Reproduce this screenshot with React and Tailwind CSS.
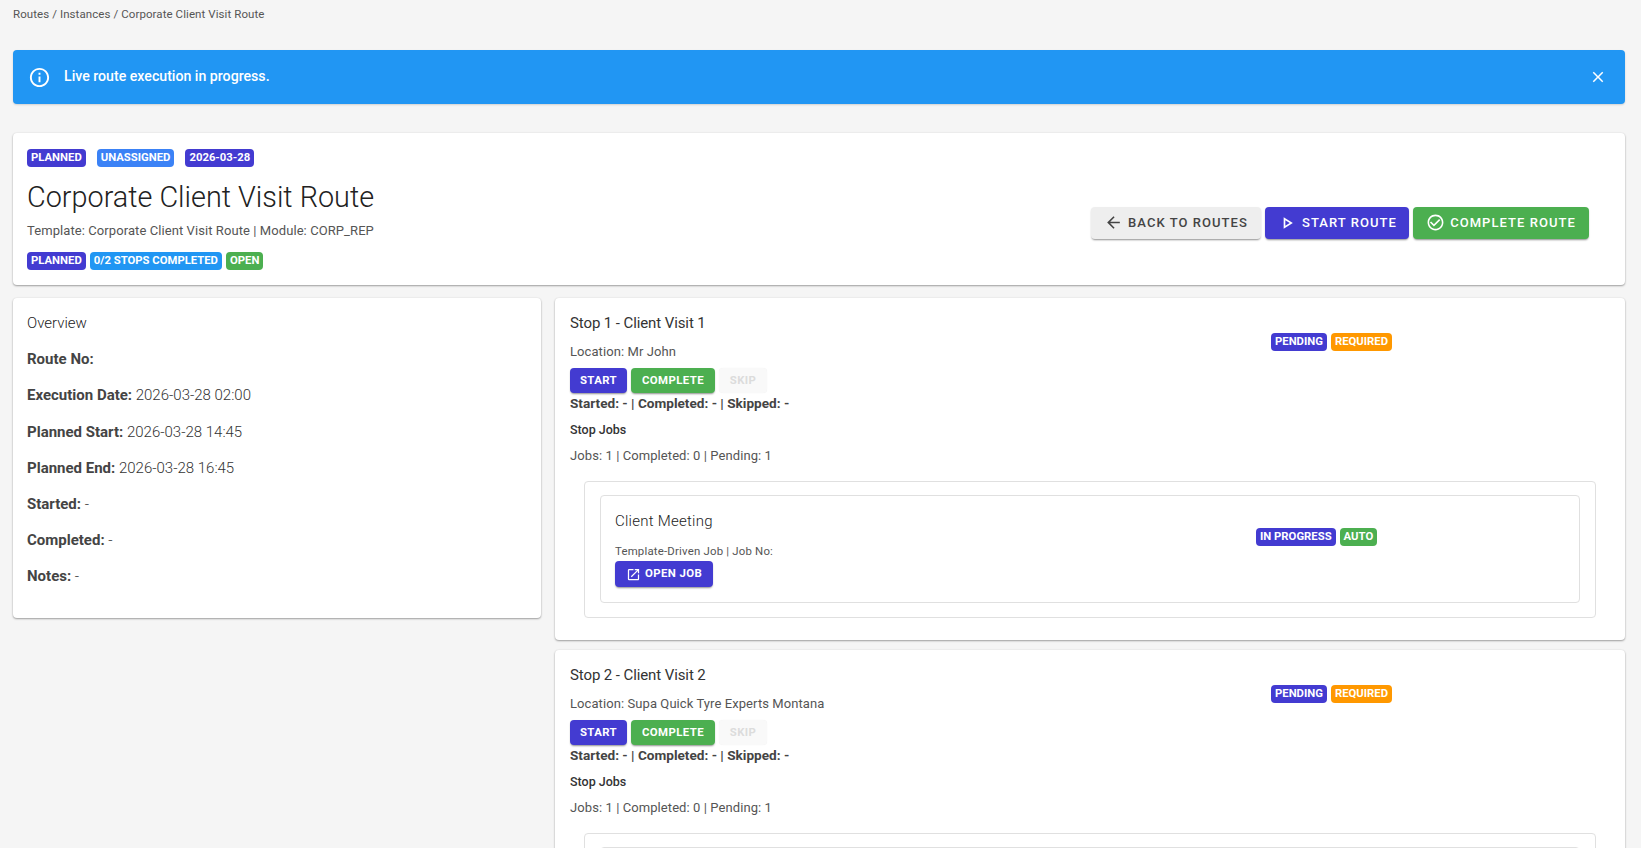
import React from "react";
import { MdInfoOutline, MdClose, MdArrowBack, MdOutlinePlayArrow, MdCheckCircleOutline, MdOpenInNew } from "react-icons/md";

const INDIGO = "bg-[#433bd1]";
const GREEN = "bg-[#4caf50]";
const BLUE = "bg-[#2196f3]";
const SKY = "bg-[#3b82f6]";
const ORANGE = "bg-[#ff9800]";

function Chip({ color, children }) {
  return (
    <span className={`${color} inline-flex h-[18px] items-center rounded-[4px] px-[4px] text-[11.3px] leading-none font-bold text-white`}>
      {children}
    </span>
  );
}

function MainButton({ color, icon, children, w }) {
  return (
    <button className={`${color} ${w} flex h-[32px] items-center justify-center gap-[5px] rounded-[4px] text-[13px] font-medium tracking-[1.05px] shadow-[0_2px_2px_-1px_rgba(0,0,0,0.35),0_1px_2px_rgba(0,0,0,0.12)]`}>
      {icon}
      {children}
    </button>
  );
}

function SmallButton({ color, w, children }) {
  return (
    <button className={`${color} ${w} flex h-[25px] items-center justify-center rounded-[4px] text-[11.4px] font-bold tracking-[0.4px] shadow-[0_2px_2px_-1px_rgba(0,0,0,0.35),0_1px_2px_rgba(0,0,0,0.12)]`}>
      {children}
    </button>
  );
}

function Stop({ title, location }) {
  return (
    <section className="rounded-[4px] bg-white px-[15px] pt-[15px] pb-[22px] shadow-[0_1px_2px_rgba(0,0,0,0.35),0_0_2px_rgba(0,0,0,0.08)]">
      <div className="grid grid-cols-[701px_1fr]">
        <div>
          <h3 className="text-[15px] leading-[20px] font-normal tracking-[-0.1px] text-[#333]">{title}</h3>
          <p className="mt-[10px] text-[13px] leading-[18px] tracking-[0.08px] text-[#555]">{location}</p>
          <div className="mt-[7px] flex gap-[4px]">
            <SmallButton color={`${INDIGO} text-white`} w="w-[57px]">START</SmallButton>
            <SmallButton color={`${GREEN} text-white`} w="w-[84px]">COMPLETE</SmallButton>
            <button className="flex h-[25px] w-[48px] items-center justify-center rounded-[4px] bg-[#f9f9f9] text-[11.4px] font-bold tracking-[0.4px] text-[#dcdcdc] shadow-[0_0_1px_rgba(0,0,0,0.08)]">SKIP</button>
          </div>
          <p className="mt-[1px] text-[13.6px] leading-[18px] font-bold text-[#444]">Started: - | Completed: - | Skipped: -</p>
        </div>
        <div className="flex gap-[4px] pt-[20px]">
          <Chip color={INDIGO}>PENDING</Chip>
          <Chip color={ORANGE}>REQUIRED</Chip>
        </div>
      </div>
      <p className="mt-[9px] text-[12.5px] leading-[18px] font-medium text-[#333]">Stop Jobs</p>
      <p className="mt-[8px] text-[13px] leading-[18px] tracking-[0.08px] text-[#555]">Jobs: 1 | Completed: 0 | Pending: 1</p>
      <div className="mt-[16px] mr-[14px] ml-[14px] rounded-[4px] border border-[#e0e0e0] px-[15px] pt-[13px] pb-[14px]">
        <div className="grid h-[108px] grid-cols-[641px_1fr] rounded-[4px] border border-[#e0e0e0] px-[14px] pt-[15px]">
          <div>
            <h4 className="text-[15px] leading-[20px] font-light tracking-[0.25px] text-[#222]">Client Meeting</h4>
            <p className="mt-[13px] text-[11.4px] leading-[15px] tracking-[0.2px] text-[#555]">Template-Driven Job | Job No:</p>
            <button className={`${INDIGO} mt-[2px] flex h-[26px] w-[98px] items-center justify-center gap-[4px] rounded-[4px] text-[11.4px] font-bold tracking-[0.4px] text-white shadow-[0_2px_2px_-1px_rgba(0,0,0,0.35),0_1px_2px_rgba(0,0,0,0.12)]`}>
              <MdOpenInNew className="text-[15px]" />
              OPEN JOB
            </button>
          </div>
          <div className="flex gap-[4px] pt-[17px]">
            <Chip color={INDIGO}>IN PROGRESS</Chip>
            <Chip color={GREEN}>AUTO</Chip>
          </div>
        </div>
      </div>
    </section>
  );
}

function Row({ label, value }) {
  return (
    <p className="mt-[18.2px] text-[15px] leading-[18px] font-light text-[#333]">
      <span className="font-bold text-[#444]">{label}</span>
      {value ? ` ${value}` : ""}
    </p>
  );
}

export default function App() {
  return (
    <div className="h-[848px] overflow-hidden bg-[#f5f5f5] pr-[16px] pl-[13px] font-['Roboto',sans-serif]">
      <p className="pt-[7px] text-[11.5px] leading-[15px] tracking-[0.08px] text-[#555]">Routes / Instances / Corporate Client Visit Route</p>

      <div className="mt-[28px] flex h-[54px] items-center rounded-[4px] bg-[#2196f3] pr-[18px] pl-[15px] text-white shadow-[0_1px_2px_rgba(0,0,0,0.15)]">
        <MdInfoOutline className="text-[23px]" />
        <span className="ml-[13px] text-[14.15px] font-medium">Live route execution in progress.</span>
        <MdClose className="ml-auto text-[18px]" />
      </div>

      <header className="mt-[29px] flex h-[152px] items-center justify-between rounded-[4px] bg-white pr-[36px] pl-[14px] shadow-[0_1px_2px_rgba(0,0,0,0.35),0_0_2px_rgba(0,0,0,0.08)]">
        <div>
          <div className="flex gap-[11px]">
            <Chip color={INDIGO}>PLANNED</Chip>
            <Chip color={SKY}>UNASSIGNED</Chip>
            <Chip color={INDIGO}>2026-03-28</Chip>
          </div>
          <h1 className="mt-[10px] text-[28.8px] leading-[40px] font-light text-[#212121]">Corporate Client Visit Route</h1>
          <p className="mt-[5px] text-[13px] leading-[18px] tracking-[0.08px] text-[#555]">Template: Corporate Client Visit Route | Module: CORP_REP</p>
          <div className="mt-[12px] flex gap-[4px]">
            <Chip color={INDIGO}>PLANNED</Chip>
            <Chip color={BLUE}>0/2 STOPS COMPLETED</Chip>
            <Chip color={GREEN}>OPEN</Chip>
          </div>
        </div>
        <div className="mt-[27px] flex gap-[4px]">
          <MainButton color="bg-[#eeeeee] text-[#444]" w="w-[170px]" icon={<MdArrowBack className="text-[19px]" />}>BACK TO ROUTES</MainButton>
          <MainButton color={`${INDIGO} text-white`} w="w-[144px]" icon={<MdOutlinePlayArrow className="text-[20px]" />}>START ROUTE</MainButton>
          <MainButton color={`${GREEN} text-white`} w="w-[176px]" icon={<MdCheckCircleOutline className="text-[19px]" />}>COMPLETE ROUTE</MainButton>
        </div>
      </header>

      <div className="mt-[13px] grid grid-cols-[528px_1fr] items-start gap-[14px]">
        <aside className="h-[320px] rounded-[4px] bg-white px-[14px] pt-[16px] shadow-[0_1px_2px_rgba(0,0,0,0.35),0_0_2px_rgba(0,0,0,0.08)]">
          <h2 className="text-[15px] leading-[18px] font-light text-[#222]">Overview</h2>
          <Row label="Route No:" />
          <Row label="Execution Date:" value="2026-03-28 02:00" />
          <Row label="Planned Start:" value="2026-03-28 14:45" />
          <Row label="Planned End:" value="2026-03-28 16:45" />
          <Row label="Started:" value="-" />
          <Row label="Completed:" value="-" />
          <Row label="Notes:" value="-" />
        </aside>
        <div className="flex flex-col gap-[10px]">
          <Stop title="Stop 1 - Client Visit 1" location="Location: Mr John" />
          <Stop title="Stop 2 - Client Visit 2" location="Location: Supa Quick Tyre Experts Montana" />
        </div>
      </div>
    </div>
  );
}
